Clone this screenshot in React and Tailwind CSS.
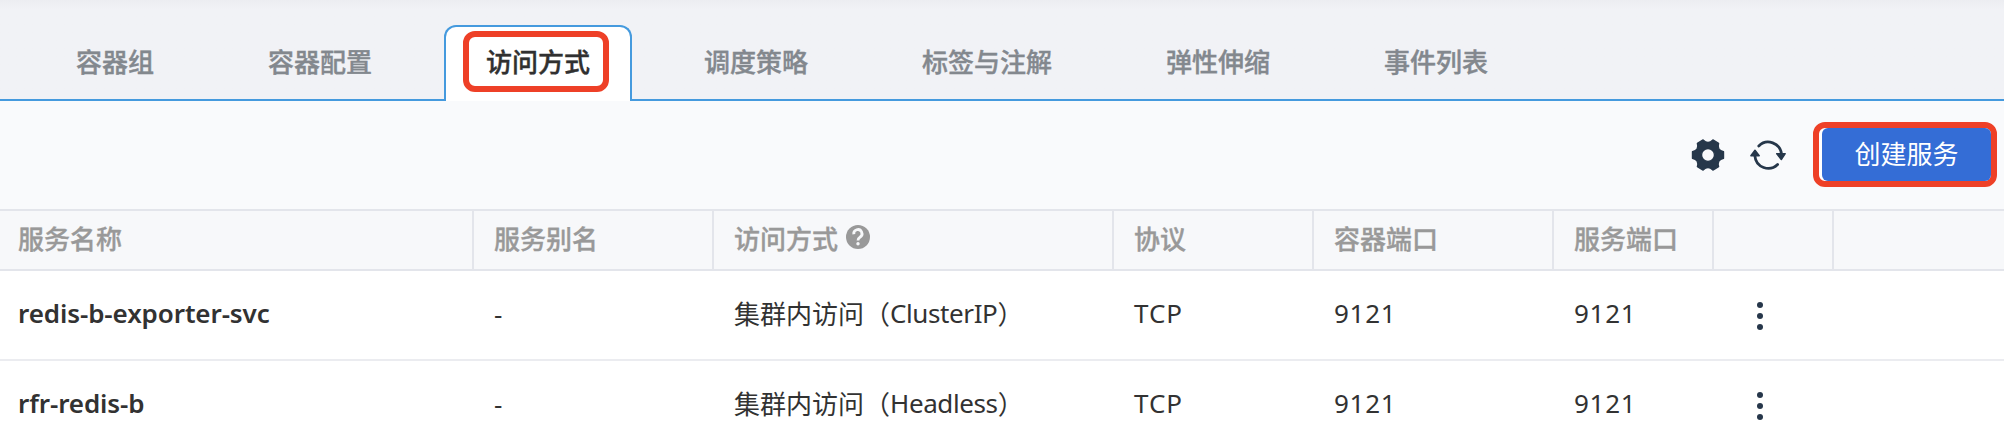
const tabs = ['容器组', '容器配置', '访问方式', '调度策略', '标签与注解', '弹性伸缩', '事件列表'];
const ACTIVE_TAB = '访问方式';

const rows = [
  { name: 'redis-b-exporter-svc', alias: '-', access: '集群内访问', kind: 'ClusterIP', protocol: 'TCP', containerPort: '9121', servicePort: '9121' },
  { name: 'rfr-redis-b', alias: '-', access: '集群内访问', kind: 'Headless', protocol: 'TCP', containerPort: '9121', servicePort: '9121' },
];

const GRID = 'grid grid-cols-[474px_240px_400px_200px_240px_160px_120px_1fr]';

function Tab({ label, active }) {
  if (active) {
    return (
      <div className="relative z-10 -mb-[2px] flex h-[76px] items-center rounded-t-[12px] border-2 border-b-0 border-[#459ade] bg-white px-10 pb-[6px] font-medium text-[#303030]">
        {label}
        <div className="absolute left-[17px] top-[4px] h-[61px] w-[146px] rounded-[12px] border-[6px] border-[#ee4027]" />
      </div>
    );
  }
  return <div className="flex h-[76px] items-center px-[42px] pb-px font-medium text-[#83888e]">{label}</div>;
}

function GearIcon() {
  return (
    <svg width="34" height="34" viewBox="-17 -17 34 34" fill="#26374a">
      <path
        d="M15.5 -3.3V3.3Q8.6 5 10.6 11.75L4.9 15.05Q0 9.9 -4.9 15.05L-10.6 11.75Q-8.6 5 -15.5 3.3V-3.3Q-8.6 -5 -10.6 -11.75L-4.9 -15.05Q0 -9.9 4.9 -15.05L10.6 -11.75Q8.6 -5 15.5 -3.3ZM6.5 0A6.5 6.5 0 1 0 -6.5 0A6.5 6.5 0 1 0 6.5 0Z"
        fillRule="evenodd"
        stroke="#26374a"
        strokeWidth="1.4"
        strokeLinejoin="round"
      />
    </svg>
  );
}

function RefreshIcon() {
  return (
    <svg width="36" height="32" viewBox="0 0 36 32" fill="none" stroke="#26374a" strokeWidth="2.8" strokeLinecap="round">
      <path d="M8.8 6.9A13.4 13.4 0 0 1 31.5 15" />
      <path d="M27.6 25.5A13.4 13.4 0 0 1 4.9 17" />
      <path d="M26.8 14.7H35.2L31.3 20.5Z M9.2 16.7H0.9L5 11.3Z" fill="#26374a" strokeWidth="1.5" strokeLinejoin="round" />
    </svg>
  );
}

function HelpIcon() {
  return (
    <svg width="24" height="24" viewBox="0 0 24 24" fill="none">
      <circle cx="12" cy="12" r="12" fill="#999" />
      <path d="M7.8 9.3A4.1 4.1 0 1 1 14 12.2Q12 13.5 12 15.6" stroke="#f7f8fa" strokeWidth="2.8" />
      <circle cx="12" cy="18.8" r="1.7" fill="#f7f8fa" />
    </svg>
  );
}

function MoreIcon() {
  return (
    <svg width="6" height="28" viewBox="0 0 6 28" fill="#26374a">
      <circle cx="3" cy="3" r="3" />
      <circle cx="3" cy="14" r="3" />
      <circle cx="3" cy="25" r="3" />
    </svg>
  );
}

function HeaderCell({ children, first }) {
  return (
    <div className={`flex items-center border-r-2 border-[#e3e5eb] pb-[4px] ${first ? 'pl-[18px]' : 'pl-5'}`}>{children}</div>
  );
}

export default function App() {
  return (
    <div className="h-[438px] w-[2004px] overflow-hidden bg-white font-['Noto_Sans','Noto_Sans_CJK_SC',sans-serif] text-[26px] leading-[38px] text-[#323232]">
      <nav className="flex h-[101px] items-end gap-[30px] border-b-2 border-[#459ade] bg-[#f1f2f6] bg-linear-to-b from-[#ecedf1] to-[#f1f2f6] to-10% pl-[34px] font-['Noto_Sans_CJK_SC',sans-serif] [-webkit-text-stroke:0.4px]">
        {tabs.map((label) => (
          <Tab key={label} label={label} active={label === ACTIVE_TAB} />
        ))}
      </nav>

      <div className="flex h-[108px] items-center justify-end bg-[#f9fafc] pr-[7px]">
        <GearIcon />
        <div className="ml-[25px] mr-[27px] flex">
          <RefreshIcon />
        </div>
        <div className="-mt-px flex h-[65px] w-[184px] rounded-[12px] border-[6px] border-[#ee4027] bg-white pl-[3px]">
          <button className="flex-1 rounded-[6px] bg-[#346dd6] pb-[3px] font-['Noto_Sans_CJK_SC',sans-serif] text-white">创建服务</button>
        </div>
      </div>

      <div className={`${GRID} h-[62px] border-y-2 border-[#e3e5eb] bg-[#f7f8fa] font-['Noto_Sans_CJK_SC',sans-serif] font-medium text-[#999] [-webkit-text-stroke:0.35px]`}>
        <HeaderCell first>服务名称</HeaderCell>
        <HeaderCell>服务别名</HeaderCell>
        <HeaderCell>
          <span className="mr-2">访问方式</span>
          <div className="pb-[3px]">
            <HelpIcon />
          </div>
        </HeaderCell>
        <HeaderCell>协议</HeaderCell>
        <HeaderCell>容器端口</HeaderCell>
        <HeaderCell>服务端口</HeaderCell>
        <HeaderCell />
        <div />
      </div>

      {rows.map((row) => (
        <div key={row.name} className={`${GRID} h-[90px] items-center border-b-2 border-[#ebecf0]`}>
          <div className="pb-[5px] pl-[18px] font-semibold tracking-[-0.1px]">{row.name}</div>
          <div className="pb-[3px] pl-5">{row.alias}</div>
          <div className="flex pb-[5px] pl-5 font-['Noto_Sans_CJK_SC',sans-serif]">
            {row.access}（<span className="font-['Noto_Sans',sans-serif] tracking-[-0.4px]">{row.kind}</span>）
          </div>
          <div className="pb-[5px] pl-5 tracking-[1px]">{row.protocol}</div>
          <div className="pb-[5px] pl-5 tracking-[0.7px]">{row.containerPort}</div>
          <div className="pb-[5px] pl-5 tracking-[0.7px]">{row.servicePort}</div>
          <div className="pl-[43px] pt-[2px]">
            <MoreIcon />
          </div>
          <div />
        </div>
      ))}
    </div>
  );
}
